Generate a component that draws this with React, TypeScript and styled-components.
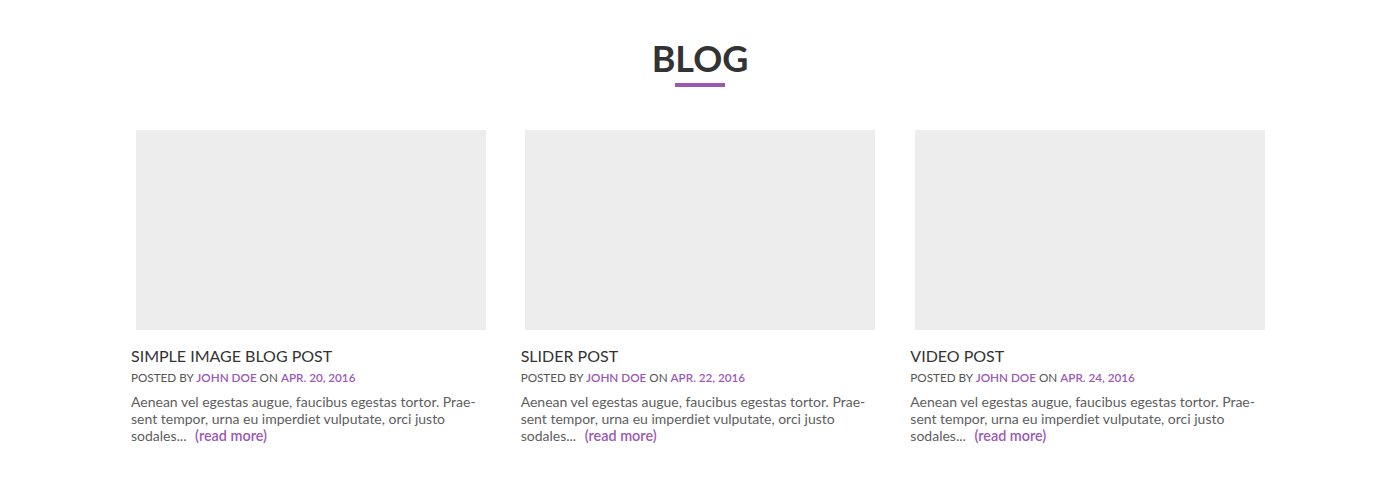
import { FunctionComponent } from "react";
import styled, { createGlobalStyle } from "styled-components";

const PURPLE = "#9b59b6";

const GlobalStyle = createGlobalStyle`
  body {
    margin: 0;
    background: #fff;
    font-family: Lato, "Open Sans", sans-serif;
    color: #333;
  }
`;

const Section = styled.section`
  width: 1170px;
  margin: 0 auto;
  padding-top: 36px;
`;

const Heading = styled.h2`
  margin: 0;
  text-align: center;
  font-size: 36px;
  line-height: 44px;
  font-weight: 700;
  color: #333;
`;

const Underline = styled.div`
  width: 50px;
  height: 4px;
  margin: 3px auto 0;
  background: ${PURPLE};
`;

const Grid = styled.div`
  display: grid;
  grid-template-columns: repeat(3, 1fr);
  margin-top: 43px;
  padding-left: 1px;
`;

const Post = styled.article`
  padding: 0 15px;
`;

const Thumb = styled.div`
  width: 350px;
  height: 200px;
  margin: 0 auto;
  background: #ededed;
`;

const Title = styled.h3`
  margin: 15px 0 0;
  font-size: 16px;
  line-height: 22px;
  font-weight: 400;
  color: #333;
  text-transform: uppercase;
`;

const Meta = styled.div`
  margin-top: 2px;
  font-size: 11.7px;
  line-height: 16px;
  font-weight: 400;
  color: #555;
  text-transform: uppercase;
`;

const Accent = styled.span`
  color: ${PURPLE};
  font-weight: 600;
`;

const Excerpt = styled.p`
  margin: 8px 0 0;
  font-size: 14px;
  line-height: 17px;
  color: #5e5e5e;
  font-weight: 400;
`;

const ReadMore = styled.a`
  margin-left: 5px;
  color: ${PURPLE};
  font-size: 14.4px;
  font-weight: 600;
  text-decoration: none;
`;

interface PostData {
  title: string;
  date: string;
}

const posts: PostData[] = [
  { title: "Simple image blog post", date: "Apr. 20, 2016" },
  { title: "Slider post", date: "Apr. 22, 2016" },
  { title: "Video post", date: "Apr. 24, 2016" },
];

const BlogPost: FunctionComponent<PostData> = ({ title, date }) => (
  <Post>
    <Thumb />
    <Title>{title}</Title>
    <Meta>
      Posted by <Accent>John Doe</Accent> on <Accent>{date}</Accent>
    </Meta>
    <Excerpt>
      Aenean vel egestas augue, faucibus egestas tortor. Prae-
      <br />
      sent tempor, urna eu imperdiet vulputate, orci justo
      <br />
      sodales... <ReadMore href="#">(read more)</ReadMore>
    </Excerpt>
  </Post>
);

const App = () => (
  <>
    <GlobalStyle />
    <Section>
      <Heading>BLOG</Heading>
      <Underline />
      <Grid>
        {posts.map((p) => (
          <BlogPost key={p.title} {...p} />
        ))}
      </Grid>
    </Section>
  </>
);

export default App;
